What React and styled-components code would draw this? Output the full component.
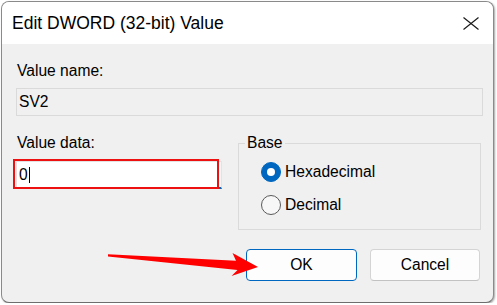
import React from 'react';
import styled, { createGlobalStyle } from 'styled-components';

const GlobalStyle = createGlobalStyle`
	html, body {
		margin: 0;
		padding: 0;
		background: #ffffff;
	}
	body {
		font-family: 'Segoe UI', 'Liberation Sans', Arial, sans-serif;
		color: #000;
	}
`;

const Window = styled.div`
	position: relative;
	box-sizing: border-box;
	margin: 1px 0 0 1px;
	width: 493px;
	height: 302px;
	border: 1px solid #8a8a8a;
	border-bottom-color: #6e6e6e;
	border-radius: 8px;
	background: #f0f0f0;
	box-shadow: 1px 1px 2px rgba(0, 0, 0, 0.35);
	overflow: hidden;
`;

const TitleBar = styled.div`
	height: 42px;
	display: flex;
	align-items: center;
	justify-content: space-between;
	padding: 0 14px 0 10px;
	background: #ffffff;
`;

const Title = styled.span`
	font-size: 17.5px;
	line-height: 20px;
	color: #000;
`;

const CloseIcon = styled.svg`
	display: block;
	width: 16px;
	height: 13px;
`;

const Body = styled.div`
	padding: 17px 10px 0 14px;
`;

const Label = styled.div`
	font-size: 15.6px;
	line-height: 20px;
	padding-left: 1px;
`;

const ReadOnlyBox = styled.div`
	box-sizing: border-box;
	margin-top: 7px;
	height: 28px;
	display: flex;
	align-items: center;
	padding-left: 2px;
	border: 1px solid #dadada;
	background: #f0f0f0;
	font-size: 15.6px;
`;

const Row = styled.div`
	display: flex;
	gap: 16px;
	margin-top: 17px;
`;

const LeftCol = styled.div`
	width: 206px;
`;

const InputWrap = styled.div`
	position: relative;
	margin-top: 8px;
`;

const Input = styled.div`
	box-sizing: border-box;
	height: 28px;
	display: flex;
	align-items: center;
	padding-left: 2px;
	background: #ffffff;
	border: 1px solid #e3e3e3;
	border-bottom: 2px solid #0067c0;
	font-size: 15.6px;
`;

const Caret = styled.span`
	display: inline-block;
	width: 1px;
	height: 16px;
	margin-left: 1px;
	background: #000;
`;

const Highlight = styled.div`
	position: absolute;
	left: -3px;
	top: -2px;
	width: 206px;
	height: 30px;
	box-sizing: border-box;
	border: 2px solid #ee1111;
	pointer-events: none;
`;

const Group = styled.fieldset`
	box-sizing: border-box;
	margin: 0;
	padding: 0 0 0 22px;
	width: 243px;
	height: 97px;
	border: 1px solid #dadada;
	min-width: 0;
`;

const Legend = styled.legend`
	margin-left: -16px;
	padding: 0 2px;
	font-size: 15.6px;
	line-height: 20px;
`;

const RadioRow = styled.div`
	display: flex;
	align-items: center;
	gap: 4px;
	height: 24px;
	margin-top: ${p => (p.$first ? '7px' : '9px')};
	font-size: 15.6px;
`;

const RadioDot = styled.span`
	box-sizing: border-box;
	width: 20px;
	height: 20px;
	border-radius: 50%;
	display: flex;
	align-items: center;
	justify-content: center;
	background: ${p => (p.$checked ? '#0067c0' : '#f7f7f7')};
	border: 1px solid ${p => (p.$checked ? '#0067c0' : '#5a5a5a')};

	&::after {
		content: '';
		display: ${p => (p.$checked ? 'block' : 'none')};
		width: 8px;
		height: 8px;
		border-radius: 50%;
		background: #ffffff;
	}
`;

const Buttons = styled.div`
	display: flex;
	justify-content: flex-end;
	gap: 13px;
	margin-top: 19px;
	padding-right: 3px;
`;

const Button = styled.button`
	box-sizing: border-box;
	width: ${p => (p.$primary ? '111px' : '110px')};
	height: 32px;
	border-radius: 4px;
	background: #fdfdfd;
	border: 1px solid ${p => (p.$primary ? '#0067c0' : '#d4d4d4')};
	border-bottom-color: ${p => (p.$primary ? '#0067c0' : '#c2c2c2')};
	font-family: inherit;
	font-size: 15.6px;
	color: #000;
	padding: 0;
`;

const ArrowLayer = styled.svg`
	position: absolute;
	left: -2px;
	top: -2px;
	width: 497px;
	height: 305px;
	pointer-events: none;
`;

const App = () => {
	return (
		<>
			<GlobalStyle />
			<Window>
				<TitleBar>
					<Title>Edit DWORD (32-bit) Value</Title>
					<CloseIcon viewBox="0 0 16 13">
						<path d="M0.5 0.5 L15.5 12.5 M15.5 0.5 L0.5 12.5" stroke="#1a1a1a" strokeWidth="1.2" fill="none" />
					</CloseIcon>
				</TitleBar>
				<Body>
					<Label>Value name:</Label>
					<ReadOnlyBox>SV2</ReadOnlyBox>
					<Row>
						<LeftCol>
							<Label>Value data:</Label>
							<InputWrap>
								<Input>
									0<Caret />
								</Input>
								<Highlight />
							</InputWrap>
						</LeftCol>
						<Group>
							<Legend>Base</Legend>
							<RadioRow $first>
								<RadioDot $checked />
								Hexadecimal
							</RadioRow>
							<RadioRow>
								<RadioDot />
								Decimal
							</RadioRow>
						</Group>
					</Row>
					<Buttons>
						<Button $primary>OK</Button>
						<Button>Cancel</Button>
					</Buttons>
				</Body>
				<ArrowLayer viewBox="0 0 497 305">
					<polygon
						points="108,254.3 236,260.8 232.5,253 258,267 231.5,276 237.5,270 108,256.6"
						fill="#ff0000"
					/>
				</ArrowLayer>
			</Window>
		</>
	);
};

export default App;
